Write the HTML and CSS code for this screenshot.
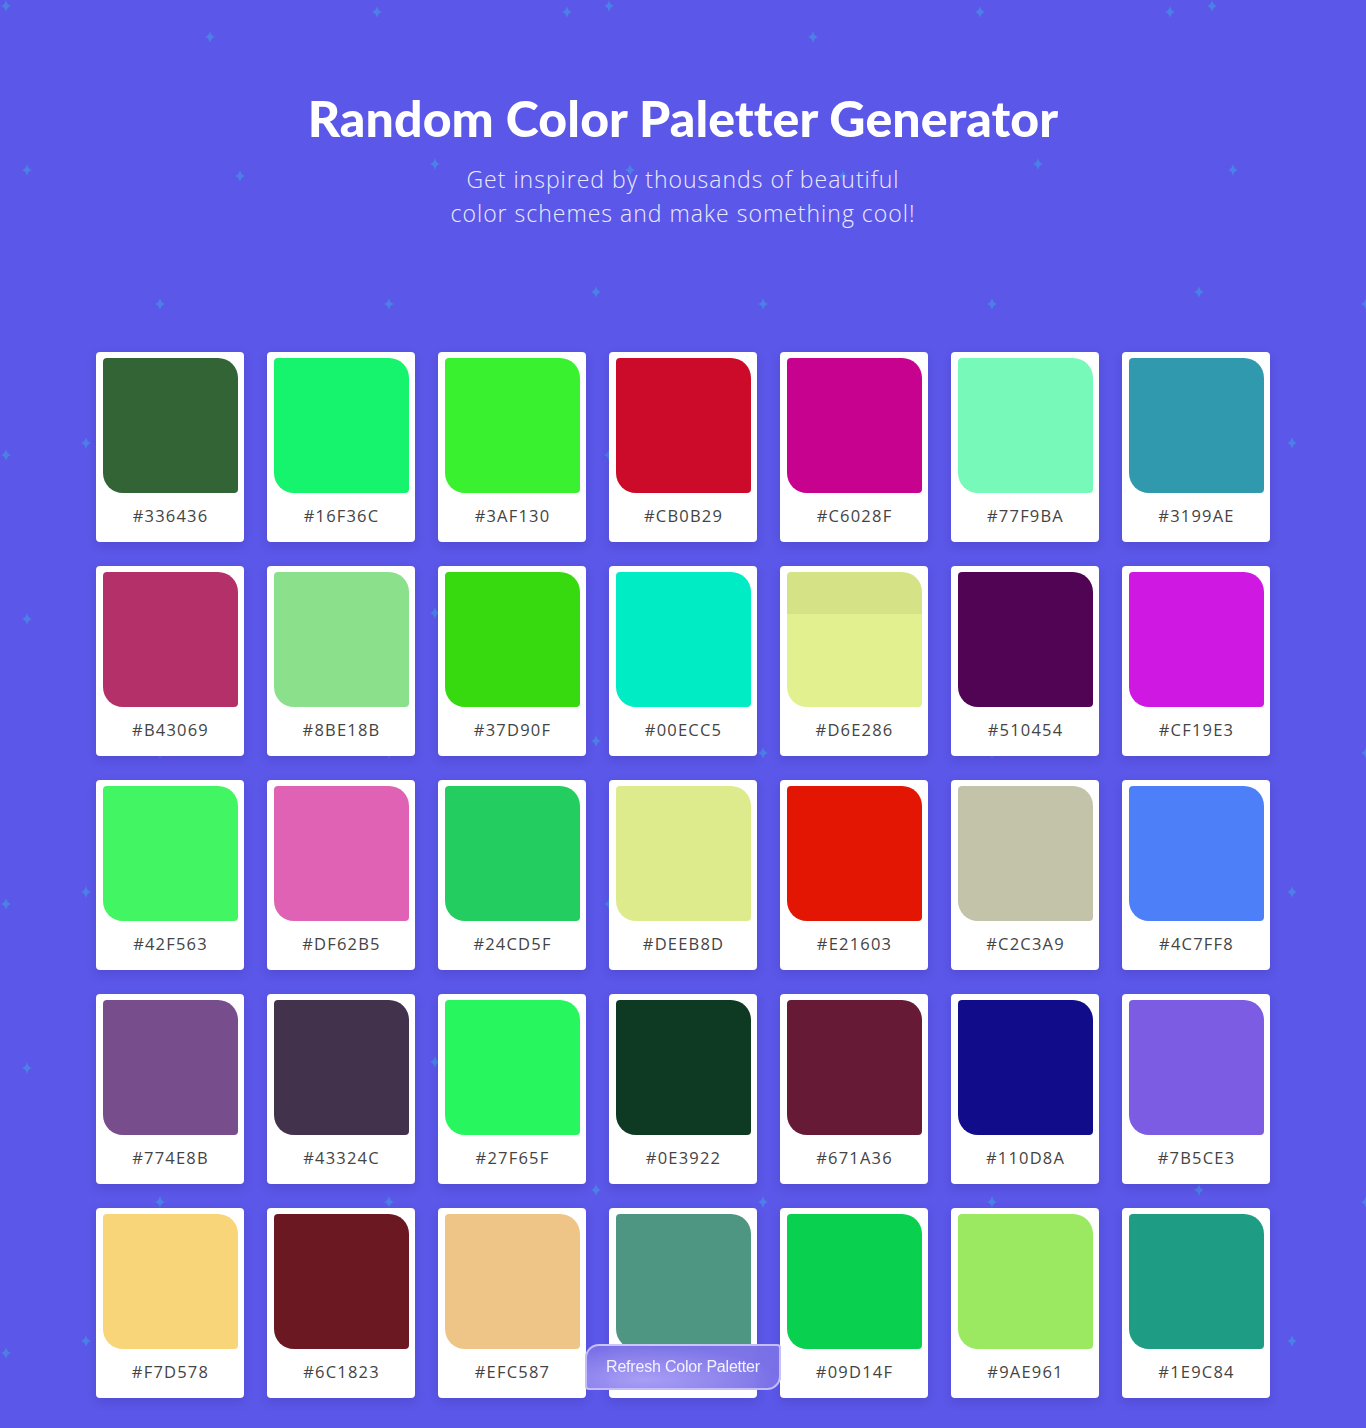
FILE: index.html
```html
<!DOCTYPE html>
<html lang="en">
<head>
<meta charset="utf-8">
<title>Random Color Paletter Generator</title>
<link rel="stylesheet" href="styles.css">
</head>
<body>
<svg class="stars" width="100%" height="100%" aria-hidden="true">
  <defs>
    <path id="st" d="M0,-6 Q1,-1 5,0 Q1,1 0,6 Q-1,1 -5,0 Q-1,-1 0,-6Z"/>
    <pattern id="sky" width="603" height="449" patternUnits="userSpaceOnUse">
      <g fill="#4b80e6">
        <use href="#st" x="6" y="6"/>
        <use href="#st" x="210" y="37"/>
        <use href="#st" x="377" y="12"/>
        <use href="#st" x="567" y="12"/>
        <use href="#st" x="27" y="170"/>
        <use href="#st" x="240" y="176"/>
        <use href="#st" x="435" y="164"/>
        <use href="#st" x="160" y="304"/>
        <use href="#st" x="389" y="304"/>
        <use href="#st" x="596" y="292"/>
        <use href="#st" x="86" y="443"/>
      </g>
    </pattern>
  </defs>
  <rect width="100%" height="100%" fill="url(#sky)"/>
</svg>

<main class="page">
  <header class="hero">
    <h1 class="title">Random Color Paletter Generator</h1>
    <p class="subtitle">Get inspired by thousands of beautiful<br>color schemes and make something cool!</p>
  </header>

  <section class="palette">
    <div class="card"><div class="swatch" style="background:#336436"></div><span class="hex">#336436</span></div>
    <div class="card"><div class="swatch" style="background:#16F36C"></div><span class="hex">#16F36C</span></div>
    <div class="card"><div class="swatch" style="background:#3AF130"></div><span class="hex">#3AF130</span></div>
    <div class="card"><div class="swatch" style="background:#CB0B29"></div><span class="hex">#CB0B29</span></div>
    <div class="card"><div class="swatch" style="background:#C6028F"></div><span class="hex">#C6028F</span></div>
    <div class="card"><div class="swatch" style="background:#77F9BA"></div><span class="hex">#77F9BA</span></div>
    <div class="card"><div class="swatch" style="background:#3199AE"></div><span class="hex">#3199AE</span></div>

    <div class="card"><div class="swatch" style="background:#B43069"></div><span class="hex">#B43069</span></div>
    <div class="card"><div class="swatch" style="background:#8BE18B"></div><span class="hex">#8BE18B</span></div>
    <div class="card"><div class="swatch" style="background:#37D90F"></div><span class="hex">#37D90F</span></div>
    <div class="card"><div class="swatch" style="background:#00ECC5"></div><span class="hex">#00ECC5</span></div>
    <div class="card"><div class="swatch" style="background:linear-gradient(#D6E286 0 42px, #E2F08F 42px)"></div><span class="hex">#D6E286</span></div>
    <div class="card"><div class="swatch" style="background:#510454"></div><span class="hex">#510454</span></div>
    <div class="card"><div class="swatch" style="background:#CF19E3"></div><span class="hex">#CF19E3</span></div>

    <div class="card"><div class="swatch" style="background:#42F563"></div><span class="hex">#42F563</span></div>
    <div class="card"><div class="swatch" style="background:#DF62B5"></div><span class="hex">#DF62B5</span></div>
    <div class="card"><div class="swatch" style="background:#24CD5F"></div><span class="hex">#24CD5F</span></div>
    <div class="card"><div class="swatch" style="background:#DEEB8D"></div><span class="hex">#DEEB8D</span></div>
    <div class="card"><div class="swatch" style="background:#E21603"></div><span class="hex">#E21603</span></div>
    <div class="card"><div class="swatch" style="background:#C2C3A9"></div><span class="hex">#C2C3A9</span></div>
    <div class="card"><div class="swatch" style="background:#4C7FF8"></div><span class="hex">#4C7FF8</span></div>

    <div class="card"><div class="swatch" style="background:#774E8B"></div><span class="hex">#774E8B</span></div>
    <div class="card"><div class="swatch" style="background:#43324C"></div><span class="hex">#43324C</span></div>
    <div class="card"><div class="swatch" style="background:#27F65F"></div><span class="hex">#27F65F</span></div>
    <div class="card"><div class="swatch" style="background:#0E3922"></div><span class="hex">#0E3922</span></div>
    <div class="card"><div class="swatch" style="background:#671A36"></div><span class="hex">#671A36</span></div>
    <div class="card"><div class="swatch" style="background:#110D8A"></div><span class="hex">#110D8A</span></div>
    <div class="card"><div class="swatch" style="background:#7B5CE3"></div><span class="hex">#7B5CE3</span></div>

    <div class="card"><div class="swatch" style="background:#F7D578"></div><span class="hex">#F7D578</span></div>
    <div class="card"><div class="swatch" style="background:#6C1823"></div><span class="hex">#6C1823</span></div>
    <div class="card"><div class="swatch" style="background:#EFC587"></div><span class="hex">#EFC587</span></div>
    <div class="card"><div class="swatch" style="background:#4E9682"></div><span class="hex hex-covered">#4E9682</span></div>
    <div class="card"><div class="swatch" style="background:#09D14F"></div><span class="hex">#09D14F</span></div>
    <div class="card"><div class="swatch" style="background:#9AE961"></div><span class="hex">#9AE961</span></div>
    <div class="card"><div class="swatch" style="background:#1E9C84"></div><span class="hex">#1E9C84</span></div>
  </section>
</main>

<button class="refresh" type="button">Refresh Color Paletter</button>
</body>
</html>
```

FILE: styles.css
```css
* { box-sizing: border-box; }

html, body {
  margin: 0;
  padding: 0;
}

body {
  position: relative;
  min-height: 1428px;
  background: #5b57e8;
  font-family: "Open Sans", "Noto Sans", sans-serif;
  overflow: hidden;
}

.stars {
  position: absolute;
  inset: 0;
  z-index: 0;
}

.page {
  position: relative;
  z-index: 1;
  display: flex;
  flex-direction: column;
  align-items: center;
  padding: 0 0 30px;
}

.hero {
  display: flex;
  flex-direction: column;
  align-items: center;
  padding-top: 88px;
  height: 352px;
}

.title {
  margin: 0;
  font-family: "Lato", sans-serif;
  font-weight: 900;
  font-size: 50px;
  line-height: 60px;
  color: #ffffff;
  letter-spacing: 0.1px;
}

.subtitle {
  margin: 14px 0 0;
  font-family: "Open Sans", sans-serif;
  font-weight: 300;
  font-size: 23px;
  line-height: 34px;
  letter-spacing: 1px;
  color: #ecebfb;
  text-align: center;
}

.palette {
  display: grid;
  grid-template-columns: repeat(7, 148px);
  column-gap: 23px;
  row-gap: 24px;
}

.card {
  display: flex;
  flex-direction: column;
  align-items: center;
  width: 148px;
  height: 190px;
  padding: 6px 6px 4px 7px;
  background: #ffffff;
  border-radius: 4px;
  box-shadow: 0 4px 10px rgba(40, 30, 120, 0.18);
}

.swatch {
  width: 135px;
  height: 135px;
  border-radius: 4px 20px 4px 20px;
}

.hex {
  display: flex;
  align-items: center;
  justify-content: center;
  flex: 1;
  font-family: "Open Sans", sans-serif;
  font-weight: 500;
  font-size: 16.5px;
  letter-spacing: 1.2px;
  color: #444444;
}

.hex-covered {
  visibility: hidden;
}

.refresh {
  position: fixed;
  left: 50%;
  bottom: 38px;
  transform: translateX(-50%);
  z-index: 5;
  width: 196px;
  height: 46px;
  padding: 0;
  border: 2px solid rgba(220, 215, 255, 0.75);
  border-radius: 14px 4px 14px 4px;
  background: radial-gradient(ellipse at 30% 80%, rgba(165, 155, 245, 0.97), rgba(122, 112, 230, 0.97) 70%);
  backdrop-filter: blur(12px);
  color: #f3f2ff;
  font-family: "Liberation Sans", Arial, sans-serif;
  font-size: 16px;
  letter-spacing: -0.2px;
  cursor: pointer;
}
```
